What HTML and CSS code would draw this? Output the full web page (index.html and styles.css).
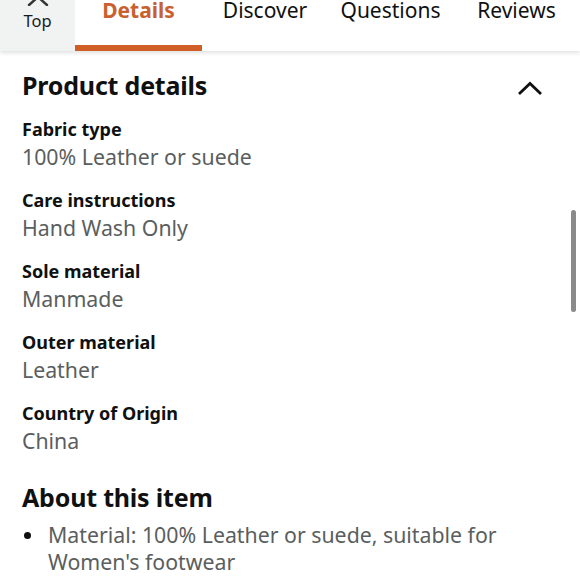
FILE: index.html
```html
<!DOCTYPE html>
<html lang="en">
<head>
<meta charset="utf-8">
<link rel="stylesheet" href="styles.css">
</head>
<body>
<header class="tabbar">
  <div class="top-btn">
    <svg class="top-chev" width="22" height="12" viewBox="0 0 22 12"><path d="M2 11 L11 3 L20 11" fill="none" stroke="#333" stroke-width="2.4" stroke-linecap="round" stroke-linejoin="round"/></svg>
    <span class="top-label">Top</span>
  </div>
  <nav class="tabs">
    <div class="tab active"><span class="tab-text">Details</span></div>
    <div class="tab"><span class="tab-text">Discover</span></div>
    <div class="tab"><span class="tab-text">Questions</span></div>
    <div class="tab"><span class="tab-text">Reviews</span></div>
  </nav>
</header>
<main class="content">
  <section class="section">
    <div class="section-head">
      <h2 class="section-title">Product details</h2>
      <svg class="collapse" width="26" height="16" viewBox="0 0 26 16"><path d="M3 13 L13 3.5 L23 13" fill="none" stroke="#0f1111" stroke-width="2.8" stroke-linecap="square"/></svg>
    </div>
    <dl class="details">
      <div class="row"><dt>Fabric type</dt><dd>100% Leather or suede</dd></div>
      <div class="row"><dt>Care instructions</dt><dd>Hand Wash Only</dd></div>
      <div class="row"><dt>Sole material</dt><dd>Manmade</dd></div>
      <div class="row"><dt>Outer material</dt><dd>Leather</dd></div>
      <div class="row"><dt>Country of Origin</dt><dd>China</dd></div>
    </dl>
  </section>
  <section class="section about">
    <h2 class="section-title">About this item</h2>
    <ul class="bullets">
      <li>Material: 100% Leather or suede, suitable for Women's footwear</li>
    </ul>
  </section>
</main>
<div class="scrollbar"></div>
</body>
</html>
```

FILE: styles.css
```css
* { box-sizing: border-box; }
html, body { margin: 0; padding: 0; }
body {
  width: 580px;
  height: 580px;
  overflow: hidden;
  background: #fff;
  font-family: "Noto Sans", "Open Sans", sans-serif;
  color: #0f1111;
  position: relative;
}
.tabbar {
  display: flex;
  height: 51px;
  background: #fff;
  box-shadow: 0 2px 4px rgba(0,0,0,0.12);
  position: relative;
  z-index: 2;
}
.top-btn {
  width: 76px;
  background: #f1f3f3;
  display: flex;
  flex-direction: column;
  align-items: center;
  overflow: hidden;
}
.top-chev { margin-top: -6px; display: block; }
.top-label {
  font-size: 16.5px;
  line-height: 20px;
  margin-top: 5px;
  color: #1a1a1a;
}
.tabs {
  display: flex;
  flex: 1;
}
.tab {
  display: flex;
  flex-direction: column;
  align-items: center;
}
.tab:nth-child(1) { width: 127px; }
.tab:nth-child(2) { width: 126px; }
.tab:nth-child(3) { width: 125px; }
.tab:nth-child(4) { width: 127px; }
.tab-text {
  display: block;
  font-size: 21px;
  line-height: 16px;
  padding-top: 2px;
  color: #0f1111;
}
.tab.active { border-bottom: 6px solid #cf5f27; }
.tab.active .tab-text { color: #c9612f; font-weight: 700; }
.content { padding: 0 22px; }
.section-head {
  display: flex;
  justify-content: space-between;
  align-items: center;
  margin-top: 18px;
}
.section-title {
  margin: 0;
  font-size: 25px;
  line-height: 32px;
  font-weight: 700;
  letter-spacing: -0.2px;
}
.collapse { margin-right: 15px; margin-top: 6px; }
.details { margin: 15px 0 0; }
.row { margin-bottom: 15px; }
.row dt {
  font-size: 18px;
  font-weight: 700;
  line-height: 26px;
}
.row dd {
  margin: 0;
  font-size: 21.3px;
  line-height: 30px;
  color: #5a5e5e;
}
.about { margin-top: 25px; }
.bullets {
  margin: 8px 0 0;
  padding-left: 26px;
  list-style: none;
}
.bullets li {
  font-size: 21.3px;
  line-height: 27px;
  color: #5a5e5e;
  position: relative;
}
.bullets li::before {
  content: "";
  position: absolute;
  left: -24px;
  top: 11px;
  width: 7px;
  height: 7px;
  border-radius: 50%;
  background: #0f1111;
}
.scrollbar {
  position: absolute;
  right: 4px;
  top: 210px;
  width: 5px;
  height: 102px;
  border-radius: 3px;
  background: #8a8a8a;
}
```
